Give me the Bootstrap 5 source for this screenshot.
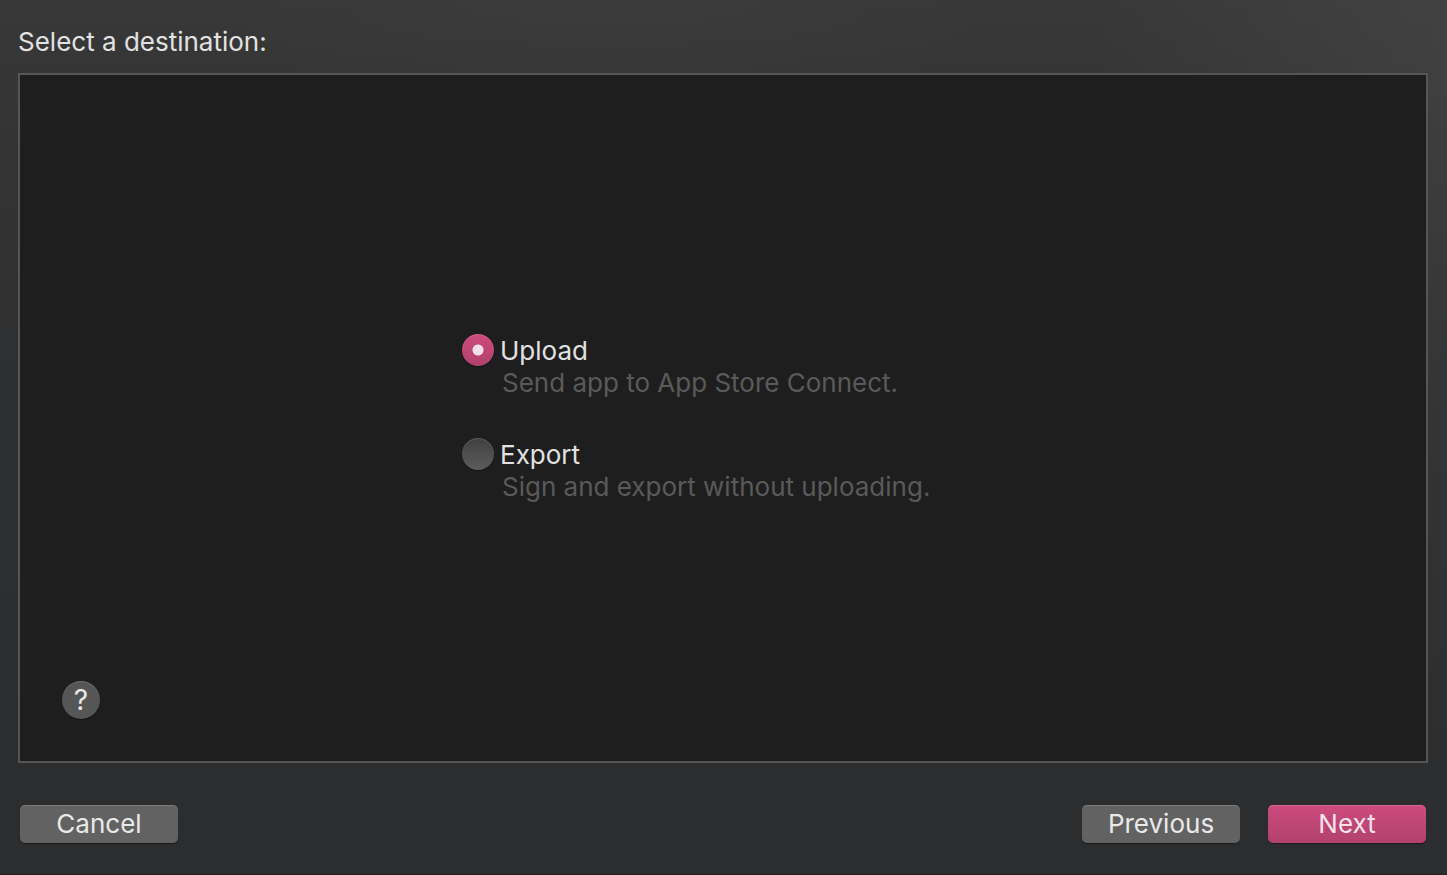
<!DOCTYPE html>
<html lang="en">
<head>
<meta charset="utf-8">
<meta name="viewport" content="width=device-width, initial-scale=1">
<title>Select a destination</title>
<link href="https://cdn.jsdelivr.net/npm/bootstrap@5.3.0/dist/css/bootstrap.min.css" rel="stylesheet">
<style>
  body {
    font-family: Inter, "Liberation Sans", sans-serif;
    font-size: 26px;
    font-weight: 400;
    line-height: 32px;
    color: #e2e2e2;
    background:
      radial-gradient(ellipse 420px 140px at 42% 0, rgba(255,255,255,.02), transparent),
      radial-gradient(ellipse 360px 700px at 100% 8%, rgba(255,255,255,.05), transparent),
      linear-gradient(#383838, #353536 10%, #2e2f30 45%, #2c2d2e);
  }
  .sheet { padding: 26px 19px 31px 18px; border-bottom: 1px solid #1d1d1d; }
  .sheet-title { font-size: inherit; line-height: inherit; font-weight: inherit; margin-bottom: 15px; }
  .pane { grid-template-rows: 1fr auto 1fr; background: #1e1e1e; border: 2px solid #555; }
  .pane-foot { grid-row: 3; padding: 0 42px 42px; }
  .choices { grid-row: 2; width: 522px; max-width: 100%; gap: 40px; }
  .choice-row { gap: 6px; }
  .choice-radio.form-check-input {
    width: 32px; height: 32px; margin: 0; border: 0; float: none; flex: none;
    background: linear-gradient(#404040, #5c5c5c);
    box-shadow: inset 0 1px 0 rgba(255,255,255,.14), 0 1px 1px rgba(0,0,0,.4);
  }
  .choice-radio.form-check-input:checked {
    background: radial-gradient(circle, #f6dfe9 5px, transparent 6px), linear-gradient(#cd4b7f, #b2416c);
  }
  .choice-label { padding-top: 2px; line-height: 30px; }
  .choice-note { padding-left: 40px; padding-top: 1px; height: 32px; color: #5a5a5a; white-space: nowrap; }
  .help {
    width: 38px; height: 38px; border: 0; color: #e6e6e6; background: #565656; font-size: 28px;
    box-shadow: inset 0 1px 0 rgba(255,255,255,.14), 0 1px 1px rgba(0,0,0,.4);
  }
  .actions { padding: 42px 2px 0; gap: 28px; }
  .action {
    --bs-btn-color: #e9e9e9; --bs-btn-hover-color: #fff; --bs-btn-hover-bg: #6c6c6c;
    width: 158px; height: 38px; padding: 0; border: 0; border-radius: 5px;
    font-size: 26px; line-height: 38px; background: #626262;
    box-shadow: inset 0 1px 0 rgba(255,255,255,.16), 0 1px 1px rgba(0,0,0,.4);
  }
  .action-main { --bs-btn-color: #f8e2eb; background: linear-gradient(#cd4b7f, #b2416c); }
</style>
</head>
<body>
<form class="sheet d-flex flex-column min-vh-100">
  <h1 class="sheet-title">Select a destination:</h1>
  <main class="pane d-grid flex-grow-1">
    <div class="choices d-flex flex-column mx-auto" role="radiogroup" aria-label="Destination">
      <div>
        <div class="choice-row d-flex">
          <input class="choice-radio form-check-input" type="radio" name="destination" id="upload" checked aria-describedby="upload-note">
          <label class="choice-label" for="upload">Upload</label>
        </div>
        <div class="choice-note" id="upload-note">Send app to App Store Connect.</div>
      </div>
      <div>
        <div class="choice-row d-flex">
          <input class="choice-radio form-check-input" type="radio" name="destination" id="export" aria-describedby="export-note">
          <label class="choice-label" for="export">Export</label>
        </div>
        <div class="choice-note" id="export-note">Sign and export without uploading.</div>
      </div>
    </div>
    <div class="pane-foot d-flex align-items-end">
      <button type="button" class="help rounded-circle d-flex align-items-center justify-content-center p-0" aria-label="Help">?</button>
    </div>
  </main>
  <div class="actions d-flex">
    <button type="button" class="action btn me-auto">Cancel</button>
    <button type="button" class="action btn">Previous</button>
    <button type="submit" class="action action-main btn">Next</button>
  </div>
</form>
<script src="https://cdn.jsdelivr.net/npm/bootstrap@5.3.0/dist/js/bootstrap.bundle.min.js"></script>
</body>
</html>
